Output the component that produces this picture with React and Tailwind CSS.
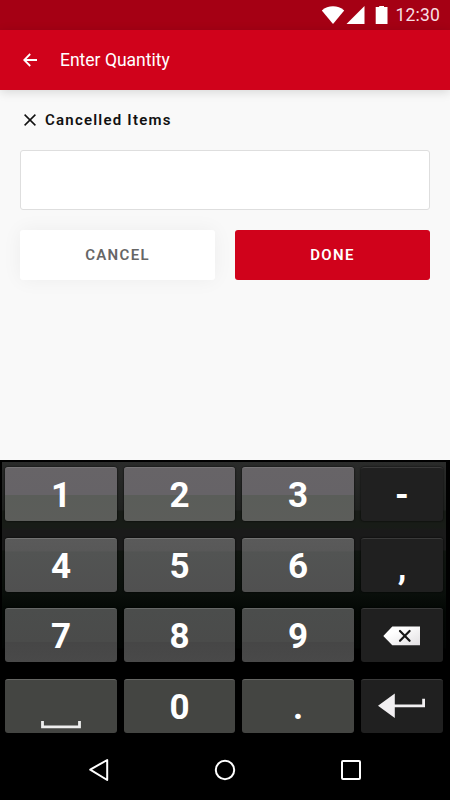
import clsx from "clsx";

const rows = [
  {
    keys: ["1", "2", "3", "-"],
    bg: "bg-[linear-gradient(#676467_0%,#666367_50%,#5a5d59_51%,#5c5d5a_100%)] border-t-[#777577]",
  },
  {
    keys: ["4", "5", "6", ","],
    bg: "bg-[linear-gradient(#5a5a5a_0%,#585858_23%,#525453_24%,#505050_100%)] border-t-[#737373]",
  },
  {
    keys: ["7", "8", "9", "backspace"],
    bg: "bg-[linear-gradient(#4b4d4c_0%,#4a4b4a_62%,#464646_63%,#494949_100%)] border-t-[#666867]",
  },
  {
    keys: ["space", "0", ".", "enter"],
    bg: "bg-[#444542] border-t-[#656663]",
  },
];

const BackspaceIcon = () => (
  <svg width="38" height="20" viewBox="0 0 38 20" className="block">
    <defs>
      <linearGradient id="shine" x1="0" y1="0" x2="1" y2="1">
        <stop offset="0.3" stopColor="#fff" />
        <stop offset="1" stopColor="#e2e0e2" />
      </linearGradient>
    </defs>
    <path d="M0.3 10 9.3 0.5H37V19.3H9.3Z" fill="url(#shine)" />
    <path d="M17 5 26.6 14.8M26.6 5 17 14.8" stroke="#161616" strokeWidth="2.2" strokeLinecap="round" />
  </svg>
);

const EnterIcon = () => (
  <svg width="48" height="26" viewBox="0 0 48 26" className="block">
    <path d="M0 12.7 16.8 0.5V11.5H44.2V5.8H47V14.2H16.8V25Z" fill="#f1eff1" />
  </svg>
);

const SpaceIcon = () => (
  <svg width="40" height="8" viewBox="0 0 40 8" className="block">
    <path d="M1.5 0V5.8H38.5V0" fill="none" stroke="#eee" strokeWidth="2.8" />
  </svg>
);

const Key = ({ value, bg, dark }) => {
  return (
    <button
      className={clsx(
        "flex h-[54px] items-center justify-center rounded-[3px] border-t text-[35px] leading-none font-bold text-white shadow-[0_0_2px_#000]",
        dark ? "bg-[#202020] border-t-[#3a3a3a]" : bg
      )}
    >
      {value === "backspace" && <BackspaceIcon />}
      {value === "enter" && (
        <span className="-mt-0.5">
          <EnterIcon />
        </span>
      )}
      {value === "space" && (
        <span className="mt-9">
          <SpaceIcon />
        </span>
      )}
      {value.length === 1 && <span className={value === "," ? "pt-1" : "pt-0.5"}>{value}</span>}
    </button>
  );
};

const StatusBar = () => (
  <div className="flex h-[30px] items-center justify-end bg-[#a50014] pr-2.5 text-white">
    <svg width="70" height="20" viewBox="0 0 70 20" fill="currentColor" className="mr-1 block">
      <path d="M0.8 5.4C7 -0.2 17 -0.2 23.2 5.4L12 19Z" />
      <path d="M25.5 19 43.5 1V19Z" />
      <path d="M54.7 2H58.2V1H63V2H66.5V19H54.7Z" />
    </svg>
    <span className="pt-0.5 text-[17.5px] leading-none tracking-[0.2px] text-[#f7dfe2]">12:30</span>
  </div>
);

const Header = () => (
  <div className="relative flex h-[60px] items-center bg-[#d0021b] pl-[23px] text-white shadow-[0_2px_10px_rgba(0,0,0,0.14)]">
    <svg width="14" height="14" viewBox="0 0 14 14" fill="none" stroke="currentColor" strokeWidth="1.8" className="block">
      <path d="M14 7H1.5M7.2 1 1.2 7 7.2 13" />
    </svg>
    <h1 className="ml-[23px] pt-0.5 text-[17.5px] leading-none">Enter Quantity</h1>
  </div>
);

const Keyboard = () => (
  <div className="h-[280px] bg-black px-0.5 pt-px pr-1">
    <div className="flex h-[279px] flex-col gap-[16.7px] border-t border-black bg-[linear-gradient(#2a2b2a_0,#202220_48px,#181c17_49px,#181c17_65px,#1a1a1a_68px,#1a1a1a_88px,#101510_89px,#0b100c_128px,#030704_150px,#020403_186px,#000_187px)] pt-[5px] pr-[3px] pl-[3px]">
      {rows.map((row) => (
        <div key={row.keys[0]} className="grid grid-cols-[112px_111px_112px_82px] gap-x-[7px]">
          {row.keys.map((value, i) => (
            <Key key={value} value={value} bg={row.bg} dark={i === 3} />
          ))}
        </div>
      ))}
    </div>
  </div>
);

const NavBar = () => (
  <div className="flex h-[60px] items-center justify-center gap-[104px] bg-black text-white">
    <svg width="22" height="24" viewBox="0 0 22 24" fill="none" stroke="currentColor" strokeWidth="2" strokeLinejoin="round" className="block">
      <path d="M19.2 2V22L2.2 11.7Z" />
    </svg>
    <svg width="22" height="22" viewBox="0 0 22 22" fill="none" stroke="currentColor" strokeWidth="2" className="block">
      <circle cx="11" cy="11" r="9.2" />
    </svg>
    <svg width="22" height="22" viewBox="0 0 22 22" fill="none" stroke="currentColor" strokeWidth="2" className="block">
      <rect x="2" y="2" width="18" height="18" rx="1" />
    </svg>
  </div>
);

const App = () => {
  return (
    <div className="flex h-[800px] w-[450px] flex-col overflow-hidden bg-[#f9f9f9] font-['Roboto',sans-serif]">
      <StatusBar />
      <Header />
      <div className="flex-1 px-5 pt-5">
        <div className="flex h-5 items-center pl-1">
          <svg width="12" height="12" viewBox="0 0 12 12" stroke="#111" strokeWidth="1.5" className="block">
            <path d="M0.6 0.6 11.4 11.4M11.4 0.6 0.6 11.4" />
          </svg>
          <h2 className="ml-[9px] text-[15px] leading-none font-semibold tracking-[1.22px] text-[#111]">Cancelled Items</h2>
        </div>
        <div className="mt-5 h-[60px] rounded-[3px] border border-[#dedede] bg-white" />
        <div className="mt-5 grid grid-cols-2 gap-5">
          <button className="h-[50px] rounded-[3px] bg-white text-[15px] font-semibold tracking-[1.3px] text-[#666] shadow-[0_0_20px_rgba(0,0,0,0.05)]">
            CANCEL
          </button>
          <button className="h-[50px] rounded-[3px] bg-[#d0021b] text-[15px] font-semibold tracking-[1.3px] text-white">
            DONE
          </button>
        </div>
      </div>
      <Keyboard />
      <NavBar />
    </div>
  );
};

export default App;
